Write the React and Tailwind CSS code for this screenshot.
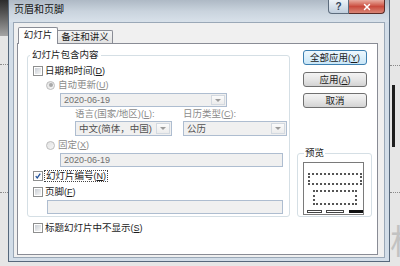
import React from 'react'
import { X } from 'lucide-react'

const Key = ({ k }) => (
  <span className="font-['Liberation_Sans',sans-serif] text-[9px]">
    (<span className="underline">{k}</span>)
  </span>
)

function Checkbox({ checked }) {
  return (
    <span className="w-[10px] h-[10px] shrink-0 border border-[#8e8f8f] bg-white p-px flex">
      {checked ? (
        <svg viewBox="0 0 8 8" className="w-full h-full bg-[#f7f7f7]">
          <path d="M1 4.2 L3 6.6 L7 0.8" fill="none" stroke="#1d4f9a" strokeWidth="1.6" />
        </svg>
      ) : (
        <span className="flex-1 bg-gradient-to-br from-[#c9ced4] to-[#f7f7f7]" />
      )}
    </span>
  )
}

function Radio({ selected }) {
  return (
    <span className="w-[9px] h-[9px] shrink-0 rounded-full border border-[#bcbcbc] bg-gradient-to-br from-[#e2e2e2] to-[#f6f6f6] flex items-center justify-center">
      {selected && <span className="w-[4px] h-[4px] rounded-full bg-[#a9a9a9]" />}
    </span>
  )
}

function Arrow() {
  return (
    <span className="w-[14px] shrink-0 self-stretch m-px border border-[#d3d9e0] bg-gradient-to-b from-[#fbfbfb] to-[#ececec] flex items-center justify-center">
      <span className="w-0 h-0 border-l-[3px] border-r-[3px] border-t-[3px] border-l-transparent border-r-transparent border-t-[#9b9b9b]" />
    </span>
  )
}

function Select({ className, children }) {
  return (
    <div className={`flex items-center border border-[#aebdd0] bg-[#f0f0f0] ${className}`}>
      <span className="flex-1 pl-[3px] text-[#6f6f6f] truncate">{children}</span>
      <Arrow />
    </div>
  )
}

function Button({ primary, children }) {
  return (
    <div
      className={`ml-[6px] w-[64px] h-[15px] shrink-0 rounded-[3px] border flex items-center justify-center ${
        primary
          ? 'border-[#3c7fb1] bg-gradient-to-b from-[#eef8fe] to-[#c9e6f7]'
          : 'border-[#707070] bg-gradient-to-b from-[#f4f4f4] via-[#e6e6e6] to-[#d3d3d3]'
      }`}
    >
      {children}
    </div>
  )
}

export default function App() {
  return (
    <div className="w-[400px] h-[266px] overflow-hidden relative bg-[#e6e6e6] font-['Liberation_Sans','Noto_Sans_CJK_SC',sans-serif] text-[9.5px] leading-[12px] text-[#1b1b1b]">
      {/* desktop behind the dialog */}
      <div className="absolute left-0 top-0 w-[8px] h-[36px] bg-gradient-to-b from-[#2c2c2c] to-[#a5a5a5]" />
      <div className="absolute left-0 top-[64px] w-[8px] border-t border-dotted border-[#8a8a8a]" />
      <div className="absolute left-0 top-[192px] w-[8px] border-t border-dotted border-[#8a8a8a]" />
      <div className="absolute right-0 top-[65px] w-[10px] border-t border-dotted border-[#8a8a8a]" />
      <div className="absolute right-0 top-[192px] w-[10px] border-t border-dotted border-[#8a8a8a]" />
      <div className="absolute left-[392px] top-[85px] w-[3px] h-[62px] bg-[#1e1e1e]" />
      <span className="absolute left-[390px] top-[222px] text-[34px] leading-[40px] text-[#c2c2c2]">析</span>

      {/* dialog window */}
      <div className="relative ml-[8px] w-[382px] h-[262px] flex flex-col border border-t-0 border-[#56687c] bg-[#d2dde8]">
        {/* title bar */}
        <div className="h-[22px] shrink-0 flex items-start justify-between pl-[5px] pr-[4px] bg-gradient-to-b from-[#aeb9c5] via-[#c9d3dd] to-[#d8e1ea]">
          <span className="pt-[4px] text-[10px] text-[#151515]">页眉和页脚</span>
          <div className="flex">
            <div className="w-[21px] h-[14px] border border-t-0 border-[#5d6c7d] rounded-bl-[4px] bg-gradient-to-b from-[#eef3f8] to-[#c0cedd] flex items-center justify-center text-[10px] leading-[10px] font-bold text-[#31445a]">
              ?
            </div>
            <div className="w-[36px] h-[14px] border border-l-0 border-t-0 border-[#5a2b27] rounded-br-[4px] bg-gradient-to-b from-[#e8aca1] via-[#c94a3d] to-[#d98576] flex items-center justify-center">
              <X size={10} strokeWidth={3.5} color="#ffffff" />
            </div>
          </div>
        </div>

        {/* client area */}
        <div className="flex-1 mx-[4px] mb-[3px] border border-[#9aa8b7] bg-[#f0f0f0] pl-[3px] pt-[4px] pr-[6px] pb-[2px] flex flex-col">
          {/* tabs */}
          <div className="h-[16px] shrink-0 flex items-end">
            <div className="relative z-10 ml-px -mb-px w-[40px] h-[17px] border border-b-0 border-[#898c95] rounded-t-[2px] bg-white flex justify-center pt-px">
              幻灯片
            </div>
            <div className="w-[55px] h-[13px] border border-l-0 border-b-0 border-[#898c95] rounded-tr-[2px] bg-gradient-to-b from-[#f5f5f5] to-[#e2e2e2] flex justify-center">
              备注和讲义
            </div>
          </div>

          {/* tab page */}
          <div className="flex-1 bg-white border border-[#898c95] pl-[9px] pt-[5px] flex">
            {/* left column */}
            <div className="w-[263px] shrink-0 flex flex-col">
              <fieldset className="border border-[#d5dfe5] rounded-[3px] pl-[5px] pb-[2px] flex flex-col">
                <legend className="-ml-[3px] px-[2px] leading-[12px]">幻灯片包含内容</legend>

                <div className="mt-[4px] h-[12px] flex items-center gap-[2px]">
                  <Checkbox />
                  <span>日期和时间<Key k="D" /></span>
                </div>

                <div className="mt-[2px] h-[12px] pl-[13px] flex items-center gap-[3px] text-[#8b8b8b]">
                  <Radio selected />
                  <span>自动更新<Key k="U" /></span>
                </div>

                <Select className="mt-[2px] ml-[27px] w-[167px] h-[14px]">
                  <span className="text-[9px]">2020-06-19</span>
                </Select>

                <div className="mt-[1px] ml-[42px] h-[12px] flex text-[#8b8b8b]">
                  <span className="w-[108px]">语言(国家/地区)<Key k="L" />:</span>
                  <span>日历类型<Key k="C" />:</span>
                </div>

                <div className="mt-[1px] ml-[42px] flex gap-[11px]">
                  <Select className="w-[97px] h-[15px]">
                    <span className="text-[#505050]">中文(简体，中国)</span>
                  </Select>
                  <Select className="w-[104px] h-[15px]">
                    <span className="text-[#505050]">公历</span>
                  </Select>
                </div>

                <div className="mt-[3px] h-[12px] pl-[13px] flex items-center gap-[3px] text-[#8b8b8b]">
                  <Radio />
                  <span>固定<Key k="X" /></span>
                </div>

                <div className="mt-[2px] ml-[27px] w-[223px] h-[14px] border border-[#aebdd0] bg-[#f0f0f0] pl-[3px] flex items-center text-[9px] text-[#6f6f6f]">
                  2020-06-19
                </div>

                <div className="mt-[3px] h-[12px] flex items-center gap-[1px]">
                  <Checkbox checked />
                  <span className="border border-dotted border-[#444] px-px leading-[10px]">幻灯片编号<Key k="N" /></span>
                </div>

                <div className="mt-[4px] h-[12px] flex items-center gap-[2px]">
                  <Checkbox />
                  <span>页脚<Key k="F" /></span>
                </div>

                <div className="mt-[2px] ml-[14px] w-[236px] h-[14px] border border-[#aebdd0] bg-[#f0f0f0]" />
              </fieldset>

              <div className="mt-[5px] ml-[6px] h-[12px] flex items-center gap-[2px]">
                <Checkbox />
                <span>标题幻灯片中不显示<Key k="S" /></span>
              </div>
            </div>

            {/* right column */}
            <div className="ml-[7px] w-[75px] shrink-0 flex flex-col pt-[1px]">
              <Button primary>全部应用<Key k="Y" /></Button>
              <div className="mt-[7px]" />
              <Button>应用<Key k="A" /></Button>
              <div className="mt-[6px]" />
              <Button>取消</Button>

              <fieldset className="mt-[39px] border border-[#d5dfe5] rounded-[3px] pb-[1px]">
                <legend className="ml-[6px] px-[1px] leading-[12px]">预览</legend>
                <div className="mt-[3px] ml-[5px] w-[61px] h-[53px] border border-[#7a7a7a] bg-white flex flex-col px-[3px]">
                  <div className="mt-[10px] ml-px w-[54px] h-[12px] shrink-0 border-2 border-dotted border-[#555]" />
                  <div className="mt-[5px] ml-[6px] w-[44px] h-[15px] shrink-0 border-2 border-dotted border-[#555]" />
                  <div className="mt-auto mb-px flex items-end">
                    <div className="w-[15px] h-[3px] shrink-0 border border-[#444]" />
                    <div className="ml-[4px] w-[18px] h-[3px] shrink-0 border border-[#444]" />
                    <div className="ml-[5px] w-[14px] h-[3px] shrink-0 bg-[#111]" />
                  </div>
                </div>
              </fieldset>
            </div>
          </div>
        </div>
      </div>
    </div>
  )
}
